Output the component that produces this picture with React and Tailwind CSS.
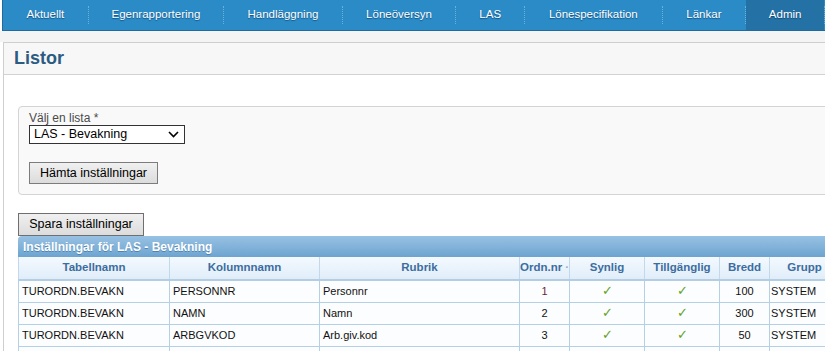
import React from 'react';

const NAV = [
  { label: 'Aktuellt', w: 'w-[85px]' },
  { label: 'Egenrapportering', w: 'w-[135px]' },
  { label: 'Handläggning', w: 'w-[118px]' },
  { label: 'Löneöversyn', w: 'w-[113px]' },
  { label: 'LAS', w: 'w-[68px]' },
  { label: 'Lönespecifikation', w: 'w-[137px]' },
  { label: 'Länkar', w: 'w-[83px]' },
  { label: 'Admin', w: 'w-[78px]', active: true },
];

const COLS = [
  { label: 'Tabellnamn', w: 'w-[151px]' },
  { label: 'Kolumnnamn', w: 'w-[150px]' },
  { label: 'Rubrik', w: 'w-[200px]' },
  { label: 'Ordn.nr', w: 'w-[50px]' },
  { label: 'Synlig', w: 'w-[75px]' },
  { label: 'Tillgänglig', w: 'w-[75px]' },
  { label: 'Bredd', w: 'w-[50px]' },
  { label: 'Grupp', w: 'w-[70px]' },
];

const ROWS = [
  ['TURORDN.BEVAKN', 'PERSONNR', 'Personnr', '1', true, true, '100', 'SYSTEM'],
  ['TURORDN.BEVAKN', 'NAMN', 'Namn', '2', true, true, '300', 'SYSTEM'],
  ['TURORDN.BEVAKN', 'ARBGVKOD', 'Arb.giv.kod', '3', true, true, '50', 'SYSTEM'],
  ['', '', '', '', false, false, '', ''],
];

const Check = () => <span className="text-[#63a11f] text-[13px] leading-none">✓</span>;

export default function App() {
  return (
    <div className="w-[825px] h-[351px] overflow-hidden bg-white font-['Liberation_Sans',Arial,sans-serif] text-[11px] text-[#111]">
      {/* top menu */}
      <div className="flex ml-[2px] h-[31px] bg-[#2b8bc7] border-b border-[#1f6b9e] border-l border-l-[#1f6b9e]">
        {NAV.map((n) => (
          <React.Fragment key={n.label}>
            <div className={`${n.w} flex items-center justify-center text-[11.5px] text-white [text-shadow:0_1px_1px_rgba(0,40,80,0.6)] ${n.active ? 'bg-[#2471a5]' : ''}`}>
              {n.label}
            </div>
            <div className="self-center h-[18px] border-l border-dotted border-[#6bb0dc]" />
          </React.Fragment>
        ))}
      </div>

      <div className="h-[11px] bg-[#f4f4f4]" />

      {/* panel */}
      <div className="ml-[3px] border-l border-t border-[#cfcfcf] h-[320px]">
        <div className="h-[32px] bg-[#f7f7f7] border-b border-[#d2d2d2] pl-[10px] flex items-center">
          <h1 className="text-[18px] font-bold text-[#2c5b82]">Listor</h1>
        </div>

        <div className="pl-[14px] pt-[31px]">
          <div className="w-[830px] border border-[#d4d4d4] rounded-l-[4px] bg-[#f9f9f9] pl-[10px] pt-[4px] pb-[10px]">
            <div className="text-[12px] text-[#4a4a4a] leading-[14px]">Välj en lista *</div>
            <div className="w-[156px] h-[19px] bg-white border border-[#333] flex items-center justify-between pl-[4px] pr-[5px] text-[12.5px] text-black">
              <span>LAS - Bevakning</span>
              <svg width="11" height="7" viewBox="0 0 11 7" fill="none" stroke="#000" strokeWidth="1.6">
                <path d="M1 1l4.5 4.5L10 1" />
              </svg>
            </div>
            <button className="mt-[18px] w-[129px] h-[22px] border border-[#7c7c7c] bg-gradient-to-b from-[#f0f0f0] to-[#dcdcdc] text-[12.5px] text-black">
              Hämta inställningar
            </button>
          </div>

          <button className="mt-[18px] w-[126px] h-[23px] border border-[#6f6f6f] bg-gradient-to-b from-[#f0f0f0] to-[#dcdcdc] text-[12.5px] text-black block">
            Spara inställningar
          </button>

          {/* table */}
          <div className="w-[830px]">
            <div className="h-[21px] rounded-tl-[4px] bg-gradient-to-b from-[#97c1e2] via-[#83b3da] to-[#6ca4d0] text-white font-bold text-[12px] pl-[5px] flex items-center [text-shadow:0_1px_0_rgba(40,90,140,0.5)]">
              Inställningar för LAS - Bevakning
            </div>
            <table className="table-fixed border-collapse">
              <thead>
                <tr className="h-[23px] bg-gradient-to-b from-[#f4f9fe] to-[#dfedf9]">
                  {COLS.map((c) => (
                    <th key={c.label} className={`${c.w} border-x border-[#c3d8ea] border-b-2 border-b-[#b3cde3] text-[11.5px] font-bold text-[#3c6d9f] text-center p-0`}>
                      {c.label}
                      {c.label === 'Ordn.nr' && <span className="text-[#9ab] ml-[3px]">·</span>}
                    </th>
                  ))}
                </tr>
              </thead>
              <tbody>
                {ROWS.map((r, i) => (
                  <tr key={i} className="h-[22px] bg-[#fcfdfe]">
                    <td className="border border-[#b5cfe4] pl-[3px]">{r[0]}</td>
                    <td className="border border-[#b5cfe4] pl-[3px]">{r[1]}</td>
                    <td className="border border-[#b5cfe4] pl-[3px]">{r[2]}</td>
                    <td className={`border border-[#b5cfe4] text-center ${r[3] === '1' ? 'text-[#6b1d3d]' : ''}`}>{r[3]}</td>
                    <td className="border border-[#b5cfe4] text-center">{r[4] && <Check />}</td>
                    <td className="border border-[#b5cfe4] text-center">{r[5] && <Check />}</td>
                    <td className="border border-[#b5cfe4] text-center">{r[6]}</td>
                    <td className="border border-[#b5cfe4] pl-[1px]">{r[7]}</td>
                  </tr>
                ))}
              </tbody>
            </table>
          </div>
        </div>
      </div>
    </div>
  );
}
